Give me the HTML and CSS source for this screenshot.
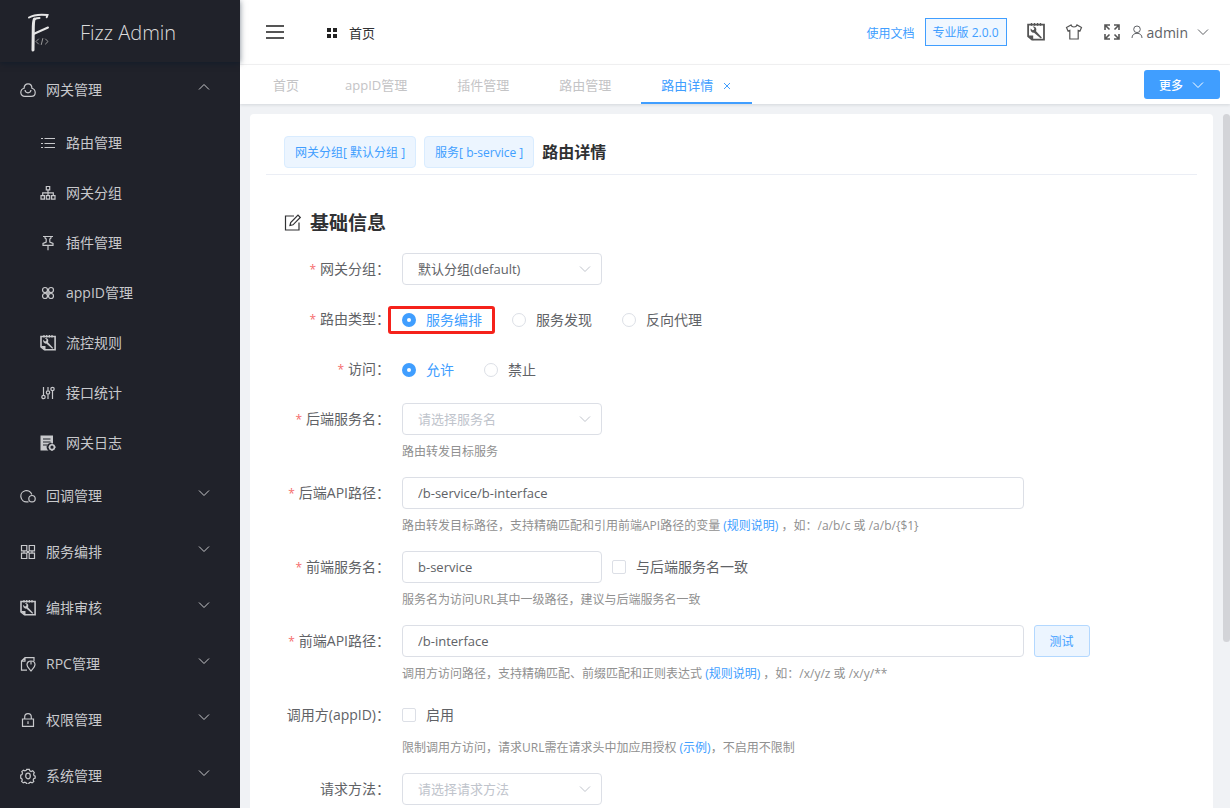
FILE: index.html
```html
<!DOCTYPE html>
<html lang="zh-CN">
<head>
<meta charset="utf-8">
<title>Fizz Admin</title>
<link rel="stylesheet" href="styles.css">
</head>
<body>
<svg class="sprite" aria-hidden="true">
  <symbol id="i-down" viewBox="0 0 12 12"><path d="M1 3.500 6 8.500 11 3.500"/></symbol>
  <symbol id="i-up" viewBox="0 0 12 12"><path d="M1 8.500 6 3.500 11 8.500"/></symbol>
  <symbol id="i-cloud" viewBox="0 0 16 16"><path d="M4.100 6.200C4.100 3.600 5.800 1.800 8 1.800s3.900 1.800 3.900 4.400c1.900.6 3.300 2.200 3.300 4.200 0 2.300-1.700 3.900-4 3.900H4.800c-2.300 0-4-1.600-4-3.900 0-2 1.400-3.600 3.300-4.200z"/><path d="M5 8c.3 1.800 1.500 2.800 3 2.800s2.700-1 3-2.800"/></symbol>
  <symbol id="i-list" viewBox="0 0 16 16"><path d="M4.500 3.500H15M4.500 8.500H15M4.500 12.500H15M1 3.500h2M1 8.500h2M1 12.500h2"/></symbol>
  <symbol id="i-tree" viewBox="0 0 16 16"><path d="M6.300 1.500h3.400v3.400H6.300zM1 10.700h3.400v3.400H1zM6.300 10.700h3.400v3.400H6.300zM11.600 10.700H15v3.400h-3.400zM8 5v5.700M2.700 10.700V7.800h10.600v2.900"/></symbol>
  <symbol id="i-pin" viewBox="0 0 16 16"><path d="M3 1.500h10M5 1.500V3l1.200 1v3L3 8.500v1.800h10V8.500L9.800 7V4L11 3V1.500M8 10.300v5"/></symbol>
  <symbol id="i-cmd" viewBox="0 0 16 16"><circle cx="5" cy="5" r="2.500"/><circle cx="11" cy="5" r="2.500"/><circle cx="5" cy="11" r="2.500"/><circle cx="11" cy="11" r="2.500"/><path d="M7 7h2v2H7z"/></symbol>
  <symbol id="i-wrench" viewBox="0 0 16 16"><path class="frame" d="M1 1.500h14.100v13.300H4.500l-3.500-3z"/><path d="M4 0v2.500M6.700 0v2.500M9.400 0v2.500M12 0v2.500"/><path class="solid" d="M1 11h4.500v4.500z"/><path class="solid" d="M3.200 4.800 5 6.400l1.200-.4.300-1.400L5 3.200c1.700-.4 3.300.8 3.300 2.500 0 .7-.1 1-.4 1.500l5.300 5.700-.9.800-6-5.100C4.500 9 2.700 7.200 3.200 4.800z"/></symbol>
  <symbol id="i-sliders" viewBox="0 0 16 16"><path d="M3.500 2v8M8 2v3.500M8 9.500V14M12.500 6v8"/><circle cx="3.500" cy="12" r="1.700"/><circle cx="8" cy="7.500" r="1.700"/><circle cx="12.500" cy="4" r="1.700"/></symbol>
  <symbol id="i-log" viewBox="0 0 16 16"><path class="solid" fill-rule="evenodd" d="M.5.500h12.500v8a4 4 0 0 0-4.500 7H.5zM3 3.400v1.100h7.500V3.400zM3 6.400v1.100h7.500V6.400zM3 9.400v1.100h4.500V9.400z"/><circle class="frame" cx="12" cy="12.200" r="2.400"/><path d="M12 8.600v1M12 15v1M8.500 12.200h1M14.700 12.200h1"/></symbol>
  <symbol id="i-callback" viewBox="0 0 16 16"><path d="M11.800 6.500A5.600 5.600 0 1 0 7 13.800h1.500"/><circle cx="12" cy="10.700" r="3.200"/></symbol>
  <symbol id="i-blocks" viewBox="0 0 16 16"><path d="M1.500 1.500h5.300v5.300H1.500zM9.200 1.500h5.300v5.300H9.200zM1.500 9.200h5.300v5.300H1.500zM9.200 9.200h5.300v5.300H9.200zM4 6.800v2.400M12 6.800v2.400M6.800 7.500h2.400M6.800 8.500h2.400"/></symbol>
  <symbol id="i-rpc" viewBox="0 0 16 16"><path d="M7 14.200H1.500V5L5 1.700h9V5M5 1.700v3.500H1.700"/><path d="M11 15c-1.500-2-4-4-4-6.300C7 6.500 8.700 5 11 5s4 1.500 4 3.700C15 11 12.500 13 11 15z"/><path d="M11 5v3.500"/></symbol>
  <symbol id="i-lock" viewBox="0 0 16 16"><path d="M2.500 7h11v7.300h-11zM4.700 7V5a3.300 3.300 0 0 1 6.600 0v2M8 9.300V12"/></symbol>
  <symbol id="i-gear" viewBox="0 0 16 16"><path d="M6.700 1.300h2.600l.5 1.600 1.300.6 1.600-.7 1.600 1.800-.7 1.500.4 1.400 1.200.7v1.900l-1.500.7-.5 1.200.6 1.600-1.700 1.300-1.500-.7-1.300.5-.6 1.400H6.700l-.6-1.400-1.300-.5-1.500.7-1.700-1.500.7-1.500-.5-1.200-1.100-.6V7.200L2 6.500l.5-1.400-.7-1.500 1.600-1.400 1.500.7 1.300-.5z"/><ellipse cx="8" cy="8" rx="2.300" ry="2.800"/></symbol>
  <symbol id="i-shirt" viewBox="0 0 18 18"><path d="M6 2 1.500 4.500 3 8l1.800-.6V16h8.400V7.400L15 8l1.500-3.500L12 2c-.4 1.300-1.500 2-3 2s-2.600-.7-3-2z"/></symbol>
  <symbol id="i-full" viewBox="0 0 18 18"><path d="M2 7V2h5M2 2l4.500 4.500M11 2h5v5M16 2l-4.500 4.500M2 11v5h5M2 16l4.500-4.500M16 11v5h-5M16 16l-4.500-4.500"/></symbol>
  <symbol id="i-user" viewBox="0 0 12 14"><circle cx="6" cy="4.300" r="3.300"/><path d="M1 13c0-3 2-4.700 5-4.700s5 1.700 5 4.700"/></symbol>
  <symbol id="i-edit" viewBox="0 0 18 18"><path d="M10 2H1.500v14H15V8.500"/><path d="m6 11.500.7-3L14 1.200l2.300 2.300L9 10.800z"/></symbol>
</svg>
<div class="app">
  <aside class="sidebar">
    <div class="logo">
      <svg class="logo-mark" viewBox="0 0 24 40"><path class="brush" d="M2 5.500C7 2.500 13 2.200 20.500 3l-.8 2.200"/><path class="bar" d="M7.500 7C6.500 8 6.500 10 6.300 15L6 38"/><path class="brush" d="M7.500 7c2-.8 3.500-1 5-1"/><path class="brush" d="M6.500 22 21 15.500"/><path class="code" d="m11.500 27-2.500 2.500 2.500 2.500M18.500 27l2.500 2.500-2.500 2.500M15.800 26.500l-1.500 6"/></svg>
      <span class="logo-name">Fizz Admin</span>
    </div>
    <nav class="menu">
      <a class="menu-item" href="#"><svg class="icon"><use href="#i-cloud"/></svg><span>网关管理</span><svg class="arrow"><use href="#i-up"/></svg></a>
      <div class="submenu">
        <a class="sub-item" href="#"><svg class="icon"><use href="#i-list"/></svg><span>路由管理</span></a>
        <a class="sub-item" href="#"><svg class="icon"><use href="#i-tree"/></svg><span>网关分组</span></a>
        <a class="sub-item" href="#"><svg class="icon"><use href="#i-pin"/></svg><span>插件管理</span></a>
        <a class="sub-item" href="#"><svg class="icon"><use href="#i-cmd"/></svg><span>appID管理</span></a>
        <a class="sub-item" href="#"><svg class="icon"><use href="#i-wrench"/></svg><span>流控规则</span></a>
        <a class="sub-item" href="#"><svg class="icon"><use href="#i-sliders"/></svg><span>接口统计</span></a>
        <a class="sub-item" href="#"><svg class="icon"><use href="#i-log"/></svg><span>网关日志</span></a>
      </div>
      <a class="menu-item" href="#"><svg class="icon"><use href="#i-callback"/></svg><span>回调管理</span><svg class="arrow"><use href="#i-down"/></svg></a>
      <a class="menu-item" href="#"><svg class="icon"><use href="#i-blocks"/></svg><span>服务编排</span><svg class="arrow"><use href="#i-down"/></svg></a>
      <a class="menu-item" href="#"><svg class="icon"><use href="#i-wrench"/></svg><span>编排审核</span><svg class="arrow"><use href="#i-down"/></svg></a>
      <a class="menu-item" href="#"><svg class="icon"><use href="#i-rpc"/></svg><span>RPC管理</span><svg class="arrow"><use href="#i-down"/></svg></a>
      <a class="menu-item" href="#"><svg class="icon"><use href="#i-lock"/></svg><span>权限管理</span><svg class="arrow"><use href="#i-down"/></svg></a>
      <a class="menu-item" href="#"><svg class="icon"><use href="#i-gear"/></svg><span>系统管理</span><svg class="arrow"><use href="#i-down"/></svg></a>
    </nav>
  </aside>
  <div class="main">
    <header class="topbar">
      <button class="icon-btn" type="button" aria-label="折叠菜单"><svg class="burger" viewBox="0 0 20 16"><path d="M1 2h18M1 8h18M1 14h18"/></svg></button>
      <a class="home" href="#"><svg class="grid-icon" viewBox="0 0 10 10"><path d="M0 0h4v4H0zM6 0h4v4H6zM0 6h4v4H0zM6 6h4v4H6z"/></svg>首页</a>
      <div class="tools">
        <a class="docs" href="#">使用文档</a>
        <button class="edition" type="button">专业版 2.0.0</button>
        <button class="icon-btn tool" type="button" aria-label="工具"><svg class="icon-lg"><use href="#i-wrench"/></svg></button>
        <button class="icon-btn tool" type="button" aria-label="主题"><svg class="icon-lg"><use href="#i-shirt"/></svg></button>
        <button class="icon-btn tool full" type="button" aria-label="全屏"><svg class="icon-lg"><use href="#i-full"/></svg></button>
        <button class="icon-btn account" type="button"><svg class="icon-user"><use href="#i-user"/></svg>admin<svg class="caret"><use href="#i-down"/></svg></button>
      </div>
    </header>
    <div class="tabbar">
      <nav class="tabs">
        <a class="tab" href="#">首页</a>
        <a class="tab" href="#">appID管理</a>
        <a class="tab" href="#">插件管理</a>
        <a class="tab" href="#">路由管理</a>
        <a class="tab active" href="#">路由详情<svg class="close" viewBox="0 0 8 8"><path d="m1 1 6 6M7 1 1 7"/></svg></a>
      </nav>
      <button class="more" type="button">更多<svg class="more-caret"><use href="#i-down"/></svg></button>
    </div>
    <main class="content">
      <div class="card">
        <div class="card-head">
          <span class="tag">网关分组[ 默认分组 ]</span>
          <span class="tag">服务[ b-service ]</span>
          <h1 class="title">路由详情</h1>
        </div>
        <form class="form">
          <h2 class="section"><svg class="edit-icon"><use href="#i-edit"/></svg>基础信息</h2>

          <div class="field">
            <label class="label required" for="group">网关分组：</label>
            <div class="control"><div class="select"><select id="group"><option>默认分组(default)</option></select><svg class="select-caret"><use href="#i-down"/></svg></div></div>
          </div>
          <div class="field">
            <span class="label required">路由类型：</span>
            <div class="control options">
              <label class="choice highlight"><input type="radio" name="type" checked><span>服务编排</span></label>
              <label class="choice"><input type="radio" name="type"><span>服务发现</span></label>
              <label class="choice"><input type="radio" name="type"><span>反向代理</span></label>
            </div>
          </div>
          <div class="field">
            <span class="label required">访问：</span>
            <div class="control options">
              <label class="choice"><input type="radio" name="access" checked><span>允许</span></label>
              <label class="choice"><input type="radio" name="access"><span>禁止</span></label>
            </div>
          </div>
          <div class="field with-tip">
            <label class="label required" for="backend">后端服务名：</label>
            <div class="control"><div class="select"><select id="backend" class="empty"><option>请选择服务名</option></select><svg class="select-caret"><use href="#i-down"/></svg></div></div>
            <p class="tip">路由转发目标服务</p>
          </div>
          <div class="field with-tip">
            <label class="label required" for="bpath">后端API路径：</label>
            <div class="control"><input class="text wide" id="bpath" type="text" value="/b-service/b-interface"></div>
            <p class="tip">路由转发目标路径，支持精确匹配和引用前端API路径的变量 <a href="#">(规则说明)</a> ，如：/a/b/c 或 /a/b/{$1}</p>
          </div>
          <div class="field with-tip">
            <label class="label required" for="front">前端服务名：</label>
            <div class="control"><input class="text" id="front" type="text" value="b-service"><label class="choice beside"><input type="checkbox"><span>与后端服务名一致</span></label></div>
            <p class="tip">服务名为访问URL其中一级路径，建议与后端服务名一致</p>
          </div>
          <div class="field with-tip">
            <label class="label required" for="fpath">前端API路径：</label>
            <div class="control"><input class="text wide" id="fpath" type="text" value="/b-interface"><button class="test" type="button">测试</button></div>
            <p class="tip">调用方访问路径，支持精确匹配、前缀匹配和正则表达式 <a href="#">(规则说明)</a> ，如：/x/y/z 或 /x/y/**</p>
          </div>
          <div class="field with-tip">
            <span class="label">调用方(appID)：</span>
            <div class="control"><label class="choice"><input type="checkbox"><span>启用</span></label></div>
            <p class="tip">限制调用方访问，请求URL需在请求头中加应用授权 <a href="#">(示例)</a>，不启用不限制</p>
          </div>
          <div class="field">
            <label class="label" for="method">请求方法：</label>
            <div class="control"><div class="select"><select id="method" class="empty"><option>请选择请求方法</option></select><svg class="select-caret"><use href="#i-down"/></svg></div></div>
          </div>
        </form>
      </div>
      <div class="scrollbar"></div>
    </main>
  </div>
</div>
</body>
</html>
```

FILE: styles.css
```css
* { box-sizing: border-box; }
body {
  margin: 0;
  font: 14px/20px "Open Sans", "Noto Sans CJK SC", sans-serif;
  color: #606266;
  background: #f0f2f5;
}
button, input, select { font-family: inherit; }
a { text-decoration: none; color: #409eff; }
svg { fill: none; stroke: currentColor; flex: none; }
.sprite { position: absolute; width: 0; height: 0; }
.frame { stroke-width: 1.6; }
.solid { fill: currentColor; stroke: none; }

.app { display: flex; height: 100vh; overflow: hidden; }

/* sidebar */
.sidebar {
  position: relative;
  z-index: 1;
  width: 240px;
  flex: none;
  background: #20222a;
  color: #c8c9cc;
}
.logo {
  display: flex;
  align-items: center;
  gap: 29px;
  height: 62px;
  padding: 2px 0 0 27px;
  background: #20222a;
  box-shadow: 0 1px 6px rgba(0, 21, 41, .5);
}
.logo-mark { width: 24px; height: 40px; color: #e6e6e6; stroke-linecap: round; }
.brush { stroke-width: 2; }
.bar { stroke-width: 3; }
.code { stroke: #999; }
.logo-name { padding-top: 2px; font-size: 20px; line-height: 28px; font-weight: 300; color: #dcdcdc; }
.menu-item, .sub-item {
  display: flex;
  align-items: center;
  gap: 10px;
  color: #c8c9cc;
}
.menu-item { height: 56px; padding: 0 30px 0 20px; }
.sub-item { height: 50px; padding-left: 40px; }
.icon { width: 16px; height: 16px; stroke-width: 1.2; }
.arrow { width: 12px; height: 12px; margin: 0 0 6px auto; }

/* top bar */
.main { flex: 1; min-width: 0; display: flex; flex-direction: column; }
.topbar {
  display: flex;
  align-items: center;
  flex: none;
  height: 65px;
  padding: 0 21px 0 25px;
  background: #fff;
  border-bottom: 1px solid #f4f4f5;
}
.icon-btn {
  display: flex;
  align-items: center;
  padding: 0;
  border: 0;
  background: none;
  color: #555;
}
.burger { width: 20px; height: 16px; stroke-width: 2; }
.home {
  display: flex;
  align-items: center;
  gap: 12px;
  margin-left: 42px;
  padding-top: 2px;
  font-size: 13px;
  color: #303133;
}
.grid-icon { width: 10px; height: 10px; fill: #222; stroke: none; }
.tools { display: flex; align-items: center; margin-left: auto; }
.docs { font-size: 12px; padding-top: 4px; }
.edition {
  height: 28px;
  margin: 0 20px 0 10px;
  padding: 0 7px;
  border: 1px solid #409eff;
  background: #f0f7ff;
  color: #409eff;
  font-size: 12px;
}
.tool { margin-right: 20px; }
.tool.full { margin-right: 10px; }
.full svg { stroke-width: 1.6; }
.icon-lg { width: 18px; height: 18px; stroke-width: 1.2; }
.account { font-size: 14px; color: #606266; }
.icon-user { width: 12px; height: 14px; margin-right: 4px; }
.caret { width: 12px; height: 12px; margin-left: 9px; }

/* page tabs */
.tabbar {
  display: flex;
  align-items: center;
  justify-content: space-between;
  flex: none;
  height: 39px;
  padding: 0 10px 0 13px;
  background: #fff;
  box-shadow: 0 1px 3px rgba(0, 21, 41, .12);
}
.tabs { display: flex; align-self: stretch; }
.tab {
  display: flex;
  align-items: center;
  padding: 2px 30px 0 20px;
  border-bottom: 2px solid transparent;
  font-size: 13px;
  color: #c4c4c6;
}
.tab:first-child { padding-right: 26px; }
.tab.active { padding-right: 21px; border-color: #409eff; color: #409eff; }
.close { width: 8px; height: 8px; margin: 3px 0 0 10px; }
.more {
  display: flex;
  align-items: center;
  height: 29px;
  gap: 9px;
  padding: 0 16px 0 15px;
  border: 0;
  border-radius: 3px;
  background: #409eff;
  color: #fff;
  font-size: 12px;
  font-weight: 500;
}
.more-caret { width: 12px; height: 12px; }

/* content */
.content { position: relative; flex: 1; min-height: 0; overflow: hidden; padding: 10px 17px 0 10px; }
.scrollbar {
  position: absolute;
  top: 10px;
  right: 0;
  width: 7px;
  height: 75%;
  border-radius: 4px;
  background: #d3d4d8;
}
.card { padding: 10px 16px; border-radius: 4px; background: #fff; }
.card-head {
  display: flex;
  align-items: center;
  gap: 8px;
  padding: 12px 18px 6px;
  border-bottom: 1px solid #ebeef5;
}
.tag {
  height: 32px;
  padding: 0 10px;
  border: 1px solid #d9ecff;
  border-radius: 4px;
  background: #ecf5ff;
  color: #409eff;
  font-size: 12px;
  line-height: 32px;
}
.title { margin: 0; font-size: 16px; line-height: 24px; font-weight: 700; color: #303133; }

.form { padding: 32px 18px 0; }
.section {
  display: flex;
  align-items: center;
  gap: 8px;
  margin: 0 0 14px;
  font-size: 19px;
  line-height: 32px;
  font-weight: 700;
  color: #303133;
}
.edit-icon { width: 18px; height: 18px; stroke-width: 1.2; }
.field {
  display: grid;
  grid-template-columns: 118px 1fr;
  margin-bottom: 18px;
}
.field.with-tip { margin-bottom: 8px; }
.label { padding-right: 12px; text-align: right; line-height: 32px; white-space: nowrap; }
.required::before { content: "*"; margin-right: 4px; color: #f56c6c; font-size: 12px; line-height: 1; }
.control { display: flex; align-items: center; height: 32px; }
.control.options { padding-top: 2px; }
.tip {
  grid-column: 2;
  margin: 0;
  font-size: 12px;
  line-height: 34px;
  color: #909090;
}
.select { display: grid; align-items: center; width: 200px; }
.select > * { grid-area: 1 / 1; }
select, .text {
  width: 200px;
  height: 32px;
  padding: 0 15px;
  border: 1px solid #dcdfe6;
  border-radius: 4px;
  background: #fff;
  color: #606266;
  font-size: 13px;
  appearance: none;
}
.text.wide { width: 80%; }
select.empty { color: #c0c4cc; }
.select-caret {
  justify-self: end;
  width: 12px;
  height: 12px;
  margin-right: 11px;
  color: #c0c4cc;
  pointer-events: none;
}
.choice { display: flex; align-items: center; gap: 10px; margin-right: 30px; }
.choice.beside { margin-left: 10px; }
.choice input {
  appearance: none;
  flex: none;
  width: 14px;
  height: 14px;
  margin: 0;
  border: 1px solid #dcdfe6;
  border-radius: 2px;
  background: #fff;
}
.choice input[type="radio"] { border-radius: 50%; }
.choice input[type="radio"]:checked { border: 5px solid #409eff; }
.choice input:checked + span { color: #409eff; }
.highlight {
  height: 28px;
  margin: 0 17px 0 -14px;
  padding: 0 10px 0 11px;
  border: 3px solid #f5221b;
  border-radius: 3px;
}
.test {
  width: 56px;
  height: 32px;
  margin-left: 10px;
  padding: 0;
  border: 1px solid #b3d8ff;
  border-radius: 3px;
  background: #ecf5ff;
  color: #409eff;
  font-size: 12px;
}
```
